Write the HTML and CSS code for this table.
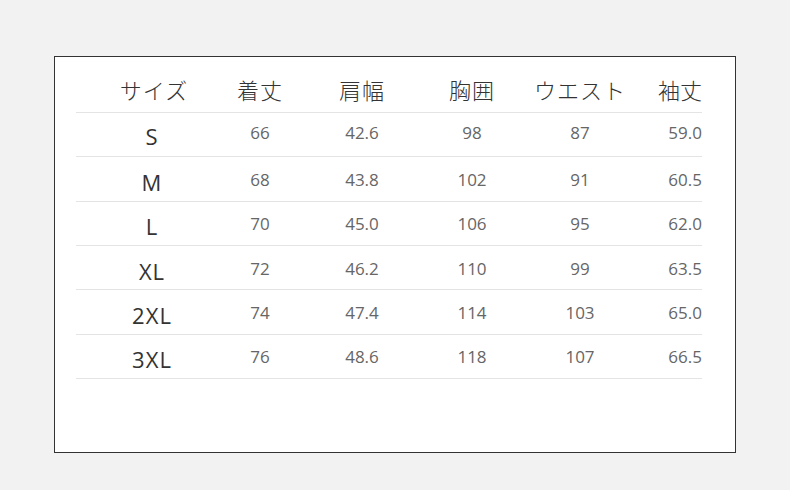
FILE: index.html
```html
<!DOCTYPE html>
<html lang="ja">
<head>
<meta charset="utf-8">
<title>サイズ表</title>
<link rel="stylesheet" href="styles.css">
</head>
<body>
<div class="frame">
  <div class="table">
    <div class="row head">
      <div class="c c1">サイズ</div>
      <div class="c c2">着丈</div>
      <div class="c c3">肩幅</div>
      <div class="c c4">胸囲</div>
      <div class="c c5">ウエスト</div>
      <div class="c c6">袖丈</div>
    </div>
    <div class="row first">
      <div class="c c1 size">S</div>
      <div class="c c2 num">66</div>
      <div class="c c3 num">42.6</div>
      <div class="c c4 num">98</div>
      <div class="c c5 num">87</div>
      <div class="c c6 num">59.0</div>
    </div>
    <div class="row">
      <div class="c c1 size">M</div>
      <div class="c c2 num">68</div>
      <div class="c c3 num">43.8</div>
      <div class="c c4 num">102</div>
      <div class="c c5 num">91</div>
      <div class="c c6 num">60.5</div>
    </div>
    <div class="row">
      <div class="c c1 size">L</div>
      <div class="c c2 num">70</div>
      <div class="c c3 num">45.0</div>
      <div class="c c4 num">106</div>
      <div class="c c5 num">95</div>
      <div class="c c6 num">62.0</div>
    </div>
    <div class="row">
      <div class="c c1 size">XL</div>
      <div class="c c2 num">72</div>
      <div class="c c3 num">46.2</div>
      <div class="c c4 num">110</div>
      <div class="c c5 num">99</div>
      <div class="c c6 num">63.5</div>
    </div>
    <div class="row">
      <div class="c c1 size">2XL</div>
      <div class="c c2 num">74</div>
      <div class="c c3 num">47.4</div>
      <div class="c c4 num">114</div>
      <div class="c c5 num">103</div>
      <div class="c c6 num">65.0</div>
    </div>
    <div class="row">
      <div class="c c1 size">3XL</div>
      <div class="c c2 num">76</div>
      <div class="c c3 num">48.6</div>
      <div class="c c4 num">118</div>
      <div class="c c5 num">107</div>
      <div class="c c6 num">66.5</div>
    </div>
  </div>
</div>
</body>
</html>
```

FILE: styles.css
```css
html, body {
  margin: 0;
  padding: 0;
  background: #f2f2f2;
}
body {
  width: 790px;
  height: 490px;
  padding: 56px 0 0 54px;
  box-sizing: border-box;
  font-family: "Open Sans", "Noto Sans CJK JP", sans-serif;
}
.frame {
  width: 682px;
  height: 397px;
  box-sizing: border-box;
  border: 1px solid #333;
  background: #fff;
  padding: 0 0 0 21px;
}
.table {
  width: 626px;
  display: flex;
  flex-direction: column;
}
.row {
  display: grid;
  grid-template-columns: 152px 64px 140px 80px 136px 54px;
  height: 44.33px;
  box-sizing: border-box;
  border-bottom: 1px solid #e4e4e4;
  align-items: center;
}
.row.head {
  height: 56px;
  align-items: end;
  padding-bottom: 10px;
}
.c {
  text-align: center;
  white-space: nowrap;
}
.c6 {
  text-align: right;
}
.head .c {
  font-family: "Noto Sans CJK JP", sans-serif;
  font-size: 22px;
  font-weight: 300;
  color: #333;
  line-height: 26px;
  letter-spacing: 1px;
}
.head .c6 {
  letter-spacing: 0;
}
.head .c1 {
  padding-left: 4px;
}
.size {
  font-size: 22px;
  color: #333;
  line-height: 26px;
  padding-top: 6px;
  letter-spacing: 1px;
}
.num {
  font-size: 17px;
  color: #666;
  line-height: 22px;
  padding-top: 2px;
}
.first .size {
  padding-top: 2px;
}
.first .num {
  padding-top: 0;
  padding-bottom: 3px;
}
```
